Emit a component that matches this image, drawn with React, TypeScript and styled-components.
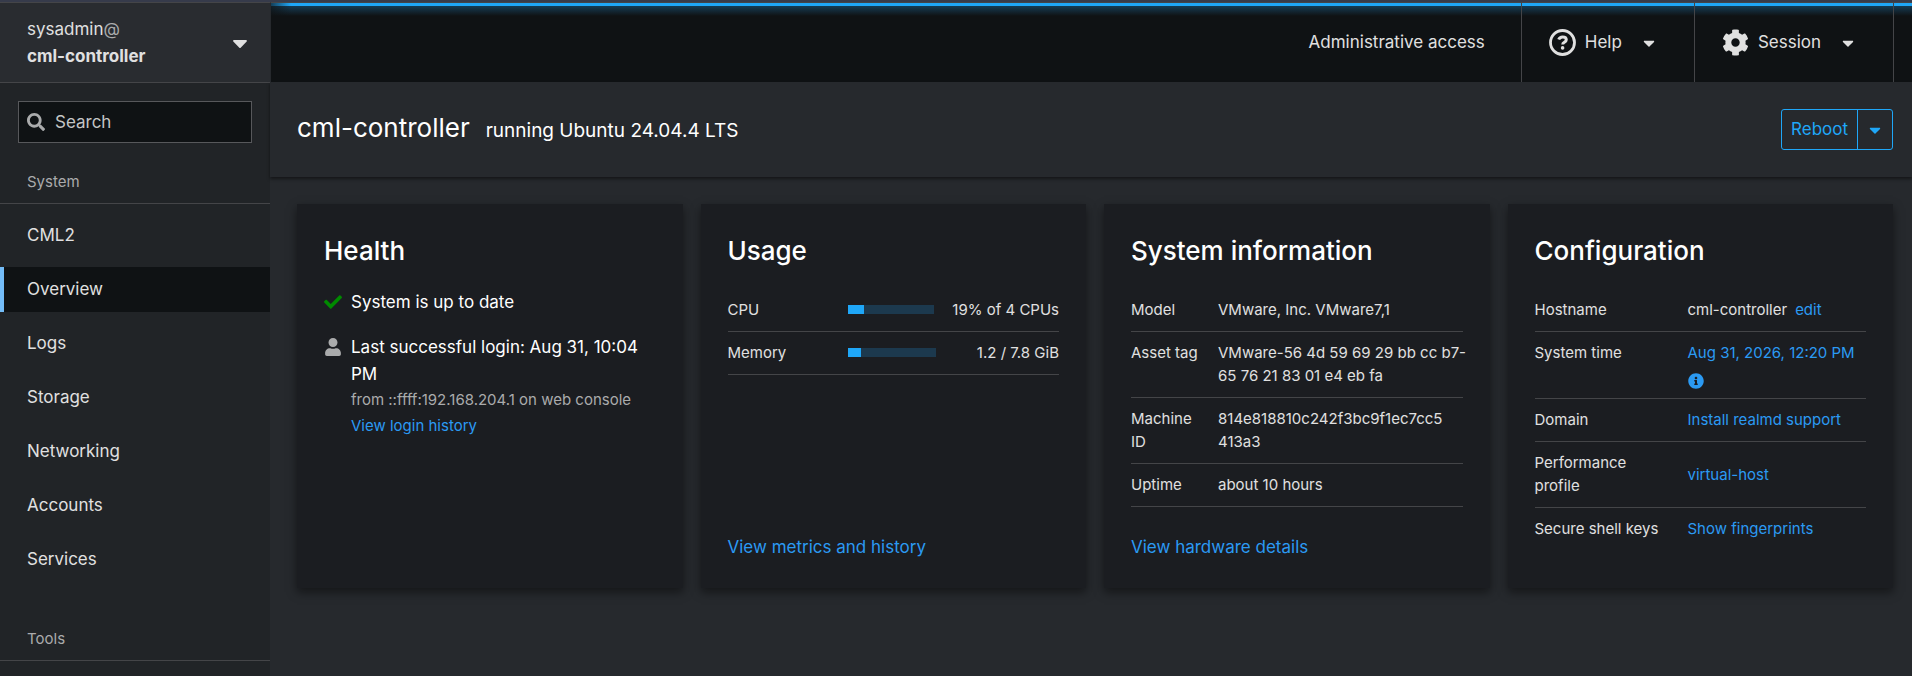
import React from "react";
import styled, { createGlobalStyle } from "styled-components";
import { FaSearch, FaCaretDown, FaCheck, FaUser, FaInfoCircle, FaCog } from "react-icons/fa";

const GlobalStyle = createGlobalStyle`
  *, *::before, *::after { box-sizing: border-box; }
  body {
    margin: 0;
    background: #26292d;
    color: #e0e0e0;
    font-family: Inter, "Liberation Sans", sans-serif;
    font-size: 17px;
    line-height: 27px;
  }
  button, input { font: inherit; color: inherit; }
  h1, h2, h3, p, ul { margin: 0; padding: 0; font-weight: 400; }
  ul { list-style: none; }
  svg { display: block; flex: none; }
`;

const Shell = styled.div`
  display: grid;
  grid-template-columns: 270px minmax(0, 1fr);
  height: 100vh;
  overflow: hidden;
  border-top: 2px solid #363b4b;
`;

const Sidebar = styled.aside`
  background: #212427;
`;

const HostSwitcher = styled.button`
  display: flex;
  align-items: center;
  justify-content: space-between;
  width: 100%;
  height: 81px;
  padding: 0 18px 0 27px;
  border: 0;
  border-top: 1px solid #444548;
  border-bottom: 1px solid #444548;
  background: #292c30;
  text-align: left;
`;

const HostName = styled.strong`
  display: block;
  font-weight: 700;
`;

const At = styled.span`
  color: #aaabac;
`;

const SearchBox = styled.label`
  display: flex;
  align-items: center;
  gap: 10px;
  height: 42px;
  margin: 18px 18px 0;
  padding: 0 8px;
  border: 1px solid #57585b;
  background: #0f1214;
  color: #aaabac;
`;

const SearchInput = styled.input`
  flex: 1;
  min-width: 0;
  padding: 0;
  border: 0;
  outline: 0;
  background: none;
  &::placeholder { color: #c4c5c6; opacity: 1; }
`;

const NavSection = styled.section`
  & + & { margin-top: 18px; }
`;

const NavTitle = styled.h2`
  padding: 27px 27px 9px;
  border-bottom: 1px solid #444548;
  color: #aaabac;
  font-size: 15px;
  line-height: 24px;
`;

const NavList = styled.ul`
  display: grid;
  gap: 9px;
  padding-top: 9px;
`;

const NavLink = styled.a<{ $active?: boolean }>`
  display: block;
  padding: 9px 27px 9px 23px;
  border-left: 4px solid ${(p) => (p.$active ? "#73bcf7" : "transparent")};
  background: ${(p) => (p.$active ? "#0f1214" : "none")};
  color: #e0e0e0;
  text-decoration: none;
`;

const Content = styled.div`
  display: flex;
  flex-direction: column;
`;

const Masthead = styled.header`
  display: flex;
  justify-content: flex-end;
  height: 80px;
  padding-right: 18px;
  border-top: 1px solid #444548;
  border-left: 1px solid #26292d;
  background:
    linear-gradient(90deg, rgba(15, 18, 20, 0.7), transparent 20px),
    linear-gradient(#1fa7f8 0 3px, #163c54 3px, #0f1214 13px);
`;

const MastheadButton = styled.button`
  display: flex;
  align-items: center;
  gap: 9px;
  padding: 0 36px;
  border: 0;
  background: none;
`;

const MenuButton = styled(MastheadButton)`
  padding: 0 36px 0 27px;
  border-left: 1px solid #444548;
  &:last-child { border-right: 1px solid #444548; }
`;

const MenuText = styled.span`
  margin-right: 9px;
`;

const PageHeader = styled.div`
  position: relative;
  display: flex;
  align-items: flex-start;
  justify-content: space-between;
  padding: 27px 19px 27px 27px;
  background: #26292d;
  box-shadow: 0 2px 3px rgba(3, 3, 3, 0.5);
`;

const Heading = styled.div`
  display: flex;
  align-items: baseline;
  gap: 16px;
  color: #fff;
`;

const HostTitle = styled.h1`
  font-size: 26px;
  line-height: 38px;
`;

const OsText = styled.span`
  font-size: 19px;
`;

const SplitButton = styled.div`
  display: flex;
  height: 41px;
  border: 1px solid #1fa7f8;
  border-radius: 3px;
  color: #1fa7f8;
`;

const SplitAction = styled.button`
  display: flex;
  align-items: center;
  padding: 0 9px;
  border: 0;
  background: none;
  & + & { padding: 0 8px; border-left: 1px solid #1fa7f8; }
`;

const CardGrid = styled.main`
  display: grid;
  grid-template-columns: repeat(4, minmax(0, 1fr));
  gap: 18px;
  padding: 27px 19px 27px 27px;
`;

const Card = styled.section`
  display: flex;
  flex-direction: column;
  min-height: 384px;
  padding: 27px;
  background: #1b1d21;
  box-shadow: 0 4px 9px rgba(3, 3, 3, 0.5);
`;

const CardTitle = styled.h2`
  margin-bottom: 18px;
  color: #fff;
  font-size: 26px;
  font-weight: 500;
  line-height: 40px;
`;

const CardFooter = styled.div`
  margin-top: auto;
`;

const Link = styled.a`
  color: #2b9af3;
  text-decoration: none;
`;

const HealthList = styled.ul`
  display: grid;
  gap: 18px;
  color: #fff;
`;

const HealthItem = styled.li`
  display: flex;
  gap: 9px;
`;

const HealthIcon = styled.span<{ $color: string }>`
  padding-top: 4px;
  color: ${(p) => p.$color};
`;

const Detail = styled.p<{ $muted?: boolean }>`
  color: ${(p) => (p.$muted ? "#aaabac" : "inherit")};
  font-size: 15px;
  line-height: ${(p) => (p.$muted ? 24 : 27)}px;
`;

const DataTable = styled.table<{ $label: number }>`
  width: 100%;
  border-spacing: 0;
  table-layout: fixed;
  font-size: 15px;
  line-height: 23px;
  th, td {
    padding: 9px 0 10px;
    border-bottom: 1px solid #444548;
    text-align: left;
    vertical-align: top;
    font-weight: 400;
  }
  th { width: ${(p) => p.$label}px; padding-right: 18px; }
`;

const ConfigTable = styled(DataTable)`
  tr:last-child > * { border-bottom: 0; }
  td { vertical-align: middle; }
`;

const Hostname = styled.span`
  margin-right: 8px;
`;

const CodeLines = styled.span`
  white-space: nowrap;
`;

const TimeInfo = styled.span`
  display: flex;
  align-items: center;
  height: 24px;
  padding-top: 9px;
  color: #2b9af3;
`;

const Meter = styled.div`
  display: flex;
  align-items: center;
  justify-content: flex-end;
  gap: 18px;
  white-space: nowrap;
`;

const Track = styled.div`
  flex: 1;
  height: 9px;
  background: #1c394e;
`;

const Fill = styled.div`
  height: 100%;
  background: #1fa7f8;
`;

const MeterText = styled.span`
  min-width: 105px;
  text-align: right;
`;

const HelpIcon = () => (
  <svg width="27" height="27" viewBox="0 0 27 27" fill="none" stroke="currentColor" aria-hidden="true">
    <circle cx="13.5" cy="13.5" r="12" strokeWidth="2.8" />
    <path d="M9.7 10.600c.7-1.900 2-2.700 3.900-2.700 2.200 0 3.700 1.200 3.700 2.900 0 2.600-3.600 2.400-3.600 4.600" strokeWidth="3" />
    <circle cx="13.600" cy="18.900" r="1.800" fill="currentColor" stroke="none" />
  </svg>
);

const navItems = ["CML2", "Overview", "Logs", "Storage", "Networking", "Accounts", "Services"];

const usage = [
  { label: "CPU", percent: 19, text: "19% of 4 CPUs" },
  { label: "Memory", percent: 15, text: "1.2 / 7.8 GiB" },
];

export default function App() {
  return (
    <>
      <GlobalStyle />
      <Shell>
        <Sidebar>
          <HostSwitcher>
            <span>
              sysadmin<At>@</At>
              <HostName>cml-controller</HostName>
            </span>
            <FaCaretDown size={24} />
          </HostSwitcher>
          <SearchBox>
            <FaSearch size={18} />
            <SearchInput type="text" placeholder="Search" aria-label="Search" />
          </SearchBox>
          <nav>
            <NavSection>
              <NavTitle>System</NavTitle>
              <NavList>
                {navItems.map((item) => (
                  <li key={item}>
                    <NavLink href="#" $active={item === "Overview"}>{item}</NavLink>
                  </li>
                ))}
              </NavList>
            </NavSection>
            <NavSection>
              <NavTitle>Tools</NavTitle>
            </NavSection>
          </nav>
        </Sidebar>
        <Content>
          <Masthead>
            <MastheadButton>Administrative access</MastheadButton>
            <MenuButton>
              <HelpIcon />
              <MenuText>Help</MenuText>
              <FaCaretDown size={18} />
            </MenuButton>
            <MenuButton>
              <FaCog size={27} />
              <MenuText>Session</MenuText>
              <FaCaretDown size={18} />
            </MenuButton>
          </Masthead>
          <PageHeader>
            <Heading>
              <HostTitle>cml-controller</HostTitle>
              <OsText>running Ubuntu 24.04.4 LTS</OsText>
            </Heading>
            <SplitButton>
              <SplitAction>Reboot</SplitAction>
              <SplitAction aria-label="More power actions">
                <FaCaretDown size={18} />
              </SplitAction>
            </SplitButton>
          </PageHeader>
          <CardGrid>
            <Card>
              <CardTitle>Health</CardTitle>
              <HealthList>
                <HealthItem>
                  <HealthIcon $color="#008a00"><FaCheck size={18} /></HealthIcon>
                  System is up to date
                </HealthItem>
                <HealthItem>
                  <HealthIcon $color="#aaabac"><FaUser size={18} /></HealthIcon>
                  <div>
                    <p>Last successful login: Aug 31, 10:04 PM</p>
                    <Detail $muted>from ::ffff:192.168.204.1 on web console</Detail>
                    <Detail><Link href="#">View login history</Link></Detail>
                  </div>
                </HealthItem>
              </HealthList>
            </Card>
            <Card>
              <CardTitle>Usage</CardTitle>
              <DataTable $label={120}>
                <tbody>
                  {usage.map((row) => (
                    <tr key={row.label}>
                      <th scope="row">{row.label}</th>
                      <td>
                        <Meter>
                          <Track>
                            <Fill style={{ width: `${row.percent}%` }} />
                          </Track>
                          <MeterText>{row.text}</MeterText>
                        </Meter>
                      </td>
                    </tr>
                  ))}
                </tbody>
              </DataTable>
              <CardFooter><Link href="#">View metrics and history</Link></CardFooter>
            </Card>
            <Card>
              <CardTitle>System information</CardTitle>
              <DataTable $label={87}>
                <tbody>
                  <tr><th scope="row">Model</th><td>VMware, Inc. VMware7,1</td></tr>
                  <tr>
                    <th scope="row">Asset tag</th>
                    <td><CodeLines>VMware-56 4d 59 69 29 bb cc b7-<br />65 76 21 83 01 e4 eb fa</CodeLines></td>
                  </tr>
                  <tr>
                    <th scope="row">Machine ID</th>
                    <td><CodeLines>814e818810c242f3bc9f1ec7cc5<br />413a3</CodeLines></td>
                  </tr>
                  <tr><th scope="row">Uptime</th><td>about 10 hours</td></tr>
                </tbody>
              </DataTable>
              <CardFooter><Link href="#">View hardware details</Link></CardFooter>
            </Card>
            <Card>
              <CardTitle>Configuration</CardTitle>
              <ConfigTable $label={153}>
                <tbody>
                  <tr><th scope="row">Hostname</th><td><Hostname>cml-controller</Hostname><Link href="#">edit</Link></td></tr>
                  <tr>
                    <th scope="row">System time</th>
                    <td>
                      <Link href="#">Aug 31, 2026, 12:20 PM</Link>
                      <TimeInfo><FaInfoCircle size={16} /></TimeInfo>
                    </td>
                  </tr>
                  <tr><th scope="row">Domain</th><td><Link href="#">Install realmd support</Link></td></tr>
                  <tr><th scope="row">Performance profile</th><td><Link href="#">virtual-host</Link></td></tr>
                  <tr><th scope="row">Secure shell keys</th><td><Link href="#">Show fingerprints</Link></td></tr>
                </tbody>
              </ConfigTable>
            </Card>
          </CardGrid>
        </Content>
      </Shell>
    </>
  );
}
